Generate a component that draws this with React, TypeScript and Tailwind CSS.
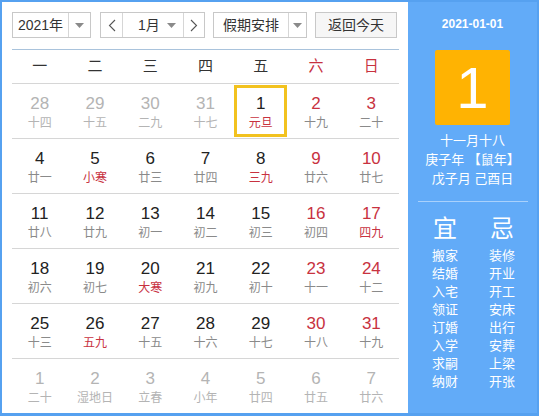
import React from 'react'

type Day = { d: number; l: string; other?: boolean; red?: boolean; lred?: boolean; sel?: boolean }

const WEEK = ['一', '二', '三', '四', '五', '六', '日']

const ROWS: Day[][] = [
  [
    { d: 28, l: '十四', other: true }, { d: 29, l: '十五', other: true }, { d: 30, l: '二九', other: true },
    { d: 31, l: '十七', other: true }, { d: 1, l: '元旦', lred: true, sel: true }, { d: 2, l: '十九', red: true },
    { d: 3, l: '二十', red: true },
  ],
  [
    { d: 4, l: '廿一' }, { d: 5, l: '小寒', lred: true }, { d: 6, l: '廿三' }, { d: 7, l: '廿四' },
    { d: 8, l: '三九', lred: true }, { d: 9, l: '廿六', red: true }, { d: 10, l: '廿七', red: true },
  ],
  [
    { d: 11, l: '廿八' }, { d: 12, l: '廿九' }, { d: 13, l: '初一' }, { d: 14, l: '初二' },
    { d: 15, l: '初三' }, { d: 16, l: '初四', red: true }, { d: 17, l: '四九', red: true, lred: true },
  ],
  [
    { d: 18, l: '初六' }, { d: 19, l: '初七' }, { d: 20, l: '大寒', lred: true }, { d: 21, l: '初九' },
    { d: 22, l: '初十' }, { d: 23, l: '十一', red: true }, { d: 24, l: '十二', red: true },
  ],
  [
    { d: 25, l: '十三' }, { d: 26, l: '五九', lred: true }, { d: 27, l: '十五' }, { d: 28, l: '十六' },
    { d: 29, l: '十七' }, { d: 30, l: '十八', red: true }, { d: 31, l: '十九', red: true },
  ],
  [
    { d: 1, l: '二十', other: true }, { d: 2, l: '湿地日', other: true }, { d: 3, l: '立春', other: true },
    { d: 4, l: '小年', other: true }, { d: 5, l: '廿四', other: true }, { d: 6, l: '廿五', other: true },
    { d: 7, l: '廿六', other: true },
  ],
]

const YI = ['搬家', '结婚', '入宅', '领证', '订婚', '入学', '求嗣', '纳财']
const JI = ['装修', '开业', '开工', '安床', '出行', '安葬', '上梁', '开张']

function Caret() {
  return (
    <svg width="9" height="5" viewBox="0 0 9 5">
      <path d="M0 0 L9 0 L4.5 5 Z" fill="#8a8a8a" />
    </svg>
  )
}

function Chevron({ dir }: { dir: 'l' | 'r' }) {
  return (
    <svg width="8" height="13" viewBox="0 0 8 13">
      <polyline
        points={dir === 'l' ? '7,1 1.5,6.5 7,12' : '1,1 6.5,6.5 1,12'}
        fill="none" stroke="#555" strokeWidth="1.1"
      />
    </svg>
  )
}

function Cell({ day }: { day: Day }) {
  const numColor = day.other ? 'text-[#b4b4b4]' : day.red ? 'text-[#c8323f]' : 'text-[#222]'
  const lunColor = day.other ? 'text-[#b4b4b4]' : day.lred ? 'text-[#c8323f]' : 'text-[#8a8a8a]'
  return (
    <div className="h-[55px] border-b border-[#d6d6d6] p-[1px]">
      <div className={`h-full flex flex-col items-center pt-[6px] ${day.sel ? 'border-[3px] border-[#f2c21f]' : 'border-[3px] border-transparent'}`}>
        <span className={`text-[17px] leading-[20px] ${numColor}`}>{day.d}</span>
        <span className={`text-[12px] leading-[16px] mt-[1px] ${lunColor}`}>{day.l}</span>
      </div>
    </div>
  )
}

export default function App() {
  return (
    <div
      className="w-[539px] h-[416px] flex border-2 border-b-[3px] border-[#56a1f0] overflow-hidden"
      style={{ fontFamily: '"Liberation Sans", Arial, "Noto Sans CJK SC", sans-serif' }}
    >
      {/* 左侧日历 */}
      <div className="w-[406px] shrink-0 bg-white pl-[10px] pr-[9px] pt-[10px] overflow-hidden">
        <div className="flex h-[26px] text-[14px] text-[#333]">
          <div className="w-[79px] flex border border-[#c8c8c8]">
            <div className="w-[55px] flex items-center justify-center">2021年</div>
            <div className="flex-1 flex items-center justify-center border-l border-[#d6d6d6]"><Caret /></div>
          </div>
          <div className="w-[105px] ml-[9px] flex border border-[#c8c8c8]">
            <div className="w-[22px] flex items-center justify-center border-r border-[#d6d6d6]"><Chevron dir="l" /></div>
            <div className="flex-1 flex items-center pl-[15px] pr-[7px] justify-between">
              <span>1月</span><Caret />
            </div>
            <div className="w-[21px] flex items-center justify-center border-l border-[#d6d6d6]"><Chevron dir="r" /></div>
          </div>
          <div className="w-[94px] ml-[8px] flex border border-[#c8c8c8]">
            <div className="w-[74px] flex items-center justify-center">假期安排</div>
            <div className="flex-1 flex items-center justify-center border-l border-[#d6d6d6]"><Caret /></div>
          </div>
          <div className="w-[82px] ml-[8px] flex items-center justify-center border border-[#c8c8c8] bg-[#f6f6f6]">
            返回今天
          </div>
        </div>

        <div className="mt-[11px] border-t border-[#a9c3dc]">
          <div className="grid grid-cols-7 h-[34px] border-b border-[#d6d6d6]">
            {WEEK.map((w, i) => (
              <div key={w} className={`flex items-center justify-center text-[15px] ${i > 4 ? 'text-[#c8323f]' : 'text-[#333]'}`}>{w}</div>
            ))}
          </div>
          <div className="grid grid-cols-7">
            {ROWS.flat().map((day, i) => <Cell key={i} day={day} />)}
          </div>
        </div>
      </div>

      {/* 右侧详情 */}
      <div className="flex-1 bg-[#62abf8] flex flex-col items-center text-white">
        <div className="mt-[14px] text-[12px] leading-[16px] font-bold">2021-01-01</div>
        <div className="mt-[18px] w-[75px] h-[75px] rounded-[2px] bg-[#ffb302] flex items-center justify-center text-[58px] leading-none">1</div>
        <div className="mt-[6px] text-[13px] leading-[19px] text-center">
          <div>十一月十八</div>
          <div>庚子年 【鼠年】</div>
          <div>戊子月 己酉日</div>
        </div>
        <div className="mt-[13px] w-[110px] h-px bg-[#a9d1fc]" />
        <div className="flex pl-[2px] mt-[13px]">
          {[{ t: '宜', items: YI }, { t: '忌', items: JI }].map(col => (
            <div key={col.t} className="w-[57px] flex flex-col items-center">
              <div className="text-[24px] leading-[28px]">{col.t}</div>
              <div className="mt-[4px] text-[13px] leading-[18px] flex flex-col items-center">
                {col.items.map(s => <span key={s}>{s}</span>)}
              </div>
            </div>
          ))}
        </div>
      </div>
    </div>
  )
}
